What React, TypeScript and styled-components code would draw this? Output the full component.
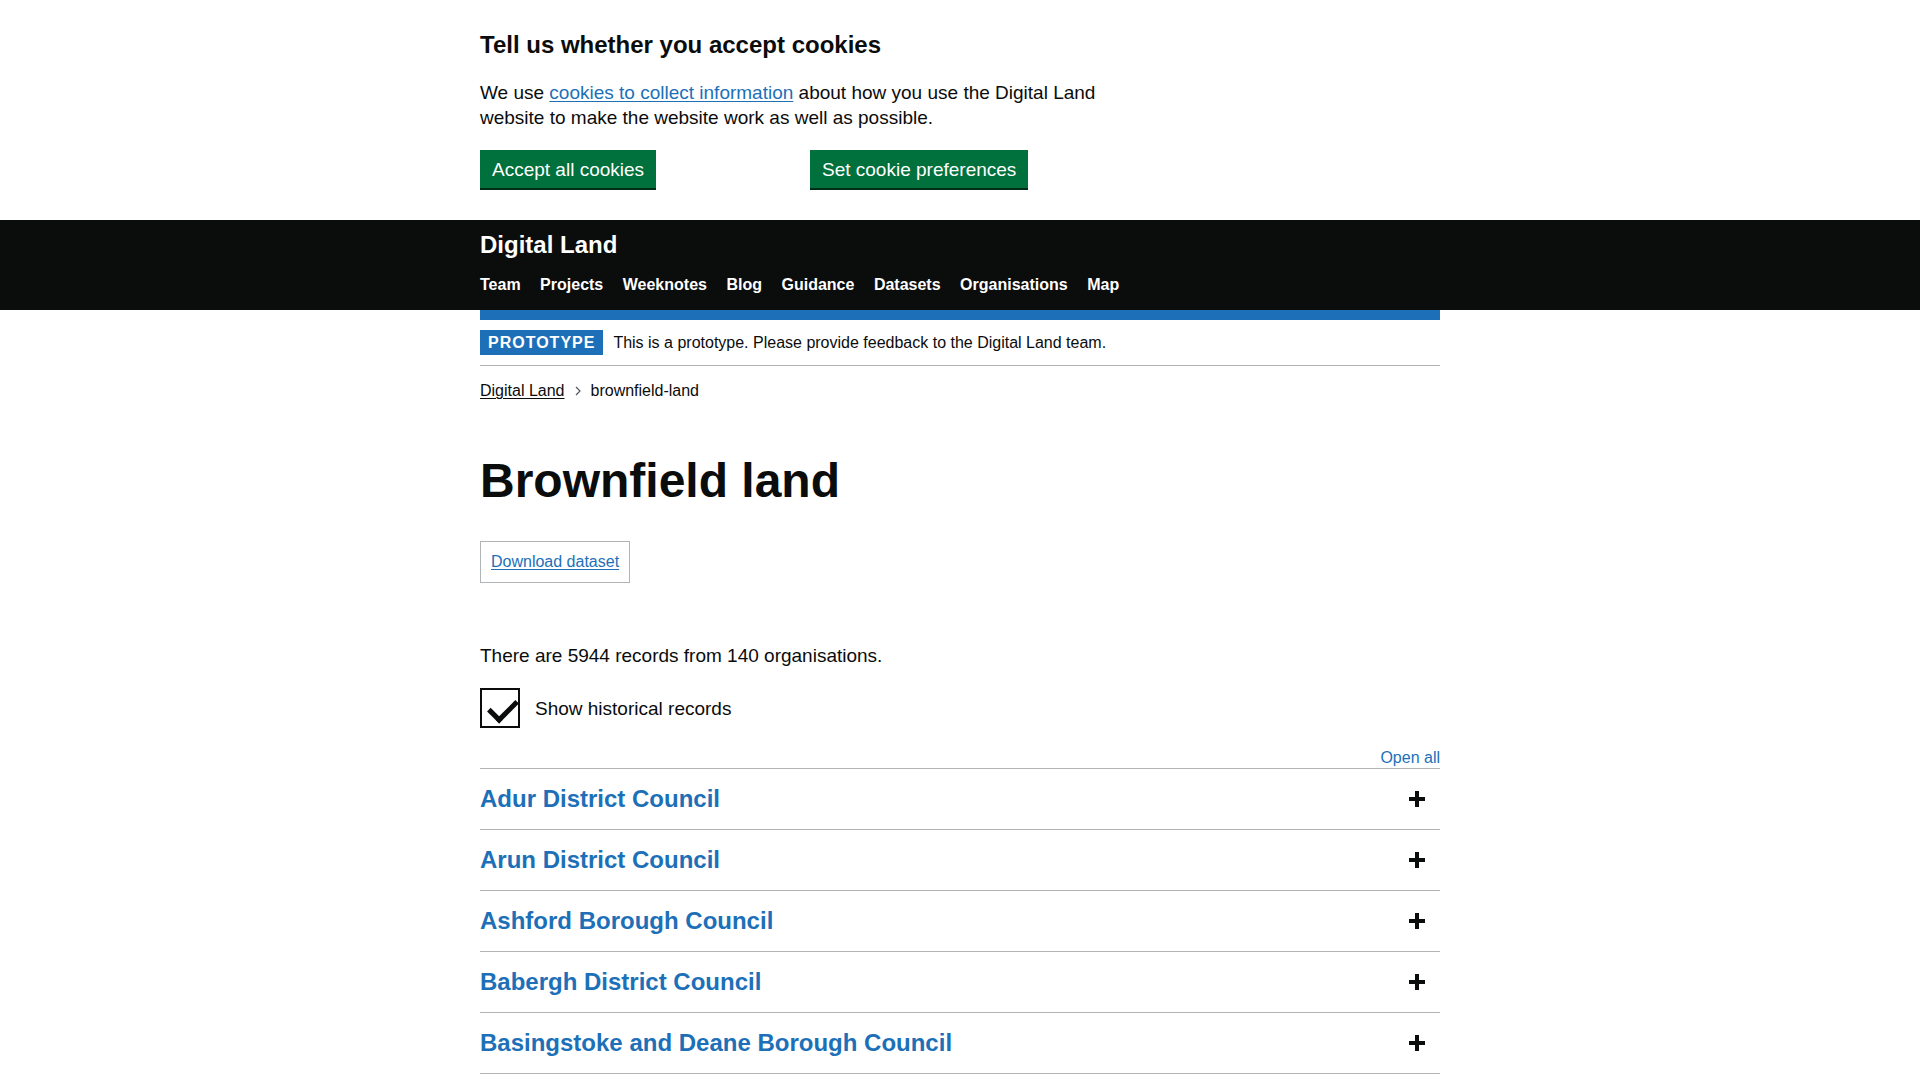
import React from 'react';
import styled, { createGlobalStyle } from 'styled-components';

const GlobalStyle = createGlobalStyle`
  html, body {
    margin: 0;
    padding: 0;
    background: #fff;
    color: #0b0c0c;
    font-family: "Liberation Sans", Arial, sans-serif;
  }

  * {
    box-sizing: border-box;
  }
`;

const Width = styled.div`
  width: 960px;
  margin: 0 auto;
`;

const CookieBanner = styled.div`
  padding: 30px 0 32px;
`;

const CookieHeading = styled.h2`
  margin: 0 0 20px;
  font-size: 24px;
  line-height: 30px;
  font-weight: 700;
`;

const CookieText = styled.p`
  width: 630px;
  margin: 0 0 20px;
  font-size: 19px;
  line-height: 25px;
`;

const Link = styled.a<{ $dark?: boolean }>`
  color: ${(p) => (p.$dark ? '#0b0c0c' : '#1d70b8')};
  text-decoration: underline;
  text-decoration-thickness: 1px;
  text-underline-offset: 0.1em;
`;

const ButtonRow = styled.div`
  display: grid;
  grid-template-columns: 330px 1fr;
  align-items: start;
`;

const Button = styled.button`
  justify-self: start;
  margin: 0;
  padding: 8px 10px 7px;
  border: 2px solid transparent;
  border-radius: 0;
  background: #00703c;
  box-shadow: 0 2px 0 #002d18;
  color: #fff;
  font-family: inherit;
  font-size: 19px;
  line-height: 19px;
  cursor: pointer;
`;

const Header = styled.header`
  background: #0b0c0c;
  color: #fff;
  padding-top: 10px;
`;

const Logo = styled.div`
  font-size: 24px;
  line-height: 30px;
  font-weight: 700;
`;

const Nav = styled.nav`
  display: flex;
  gap: 19.5px;
  margin-top: 12px;
  padding-bottom: 13px;
`;

const NavItem = styled.a`
  color: #fff;
  text-decoration: none;
  font-size: 16px;
  line-height: 25px;
  font-weight: 700;
`;

const BlueBar = styled.div`
  height: 10px;
  background: #1d70b8;
`;

const PhaseBanner = styled.div`
  display: flex;
  align-items: center;
  padding: 10px 0;
  border-bottom: 1px solid #b1b4b6;
`;

const Tag = styled.strong`
  margin-right: 10px;
  padding: 5px 8px 4px;
  background: #1d70b8;
  color: #fff;
  font-size: 16px;
  line-height: 16px;
  font-weight: 700;
  letter-spacing: 1px;
  text-transform: uppercase;
`;

const PhaseText = styled.span`
  font-size: 16px;
  line-height: 20px;
`;

const Breadcrumbs = styled.ol`
  display: flex;
  align-items: center;
  margin: 15px 0 0;
  padding: 0;
  list-style: none;
  font-size: 16px;
  line-height: 20px;
`;

const Chevron = styled.svg`
  margin: 0 10px;
`;

const Title = styled.h1`
  margin: 55px 0 35px;
  font-size: 48px;
  line-height: 50px;
  font-weight: 700;
`;

const DownloadBox = styled.div`
  display: inline-block;
  padding: 8px 10px;
  border: 1px solid #b1b4b6;
  font-size: 16px;
  line-height: 24px;
`;

const Summary = styled.p`
  margin: 60px 0 20px;
  font-size: 19px;
  line-height: 25px;
`;

const CheckRow = styled.label`
  display: flex;
  align-items: center;
  gap: 15px;
  font-size: 19px;
  line-height: 25px;
`;

const CheckBox = styled.span`
  position: relative;
  width: 40px;
  height: 40px;
  border: 2px solid #0b0c0c;

  &::after {
    content: '';
    position: absolute;
    top: 9px;
    left: 7px;
    width: 23px;
    height: 12px;
    border: solid #0b0c0c;
    border-width: 0 0 5px 5px;
    transform: rotate(-45deg);
  }
`;

const Controls = styled.div`
  display: flex;
  justify-content: flex-end;
  margin-top: 20px;
`;

const OpenAll = styled.button`
  padding: 0;
  border: 0;
  background: none;
  color: #1d70b8;
  font-family: inherit;
  font-size: 16px;
  line-height: 20px;
  cursor: pointer;
`;

const Accordion = styled.div`
  border-bottom: 1px solid #b1b4b6;
`;

const Section = styled.div`
  position: relative;
  padding: 15px 40px 15px 0;
  border-top: 1px solid #b1b4b6;
`;

const SectionHeading = styled.h2`
  margin: 0;
  color: #1d70b8;
  font-size: 24px;
  line-height: 30px;
  font-weight: 700;
`;

const PlusIcon = styled.span`
  position: absolute;
  top: 50%;
  right: 15px;
  width: 16px;
  height: 16px;
  margin-top: -8px;

  &::before,
  &::after {
    content: '';
    position: absolute;
    background: #0b0c0c;
  }

  &::before {
    left: 0;
    top: 6px;
    width: 16px;
    height: 4px;
  }

  &::after {
    left: 6px;
    top: 0;
    width: 4px;
    height: 16px;
  }
`;

const navItems = ['Team', 'Projects', 'Weeknotes', 'Blog', 'Guidance', 'Datasets', 'Organisations', 'Map'];

const organisations = [
  'Adur District Council',
  'Arun District Council',
  'Ashford Borough Council',
  'Babergh District Council',
  'Basingstoke and Deane Borough Council',
];

export default function App() {
  return (
    <>
      <GlobalStyle />
      <CookieBanner>
        <Width>
          <CookieHeading>Tell us whether you accept cookies</CookieHeading>
          <CookieText>
            We use <Link href="#">cookies to collect information</Link> about how you use the Digital Land
            website to make the website work as well as possible.
          </CookieText>
          <ButtonRow>
            <Button>Accept all cookies</Button>
            <Button>Set cookie preferences</Button>
          </ButtonRow>
        </Width>
      </CookieBanner>

      <Header>
        <Width>
          <Logo>Digital Land</Logo>
          <Nav>
            {navItems.map((item) => (
              <NavItem key={item} href="#">
                {item}
              </NavItem>
            ))}
          </Nav>
        </Width>
      </Header>

      <Width>
        <BlueBar />
        <PhaseBanner>
          <Tag>Prototype</Tag>
          <PhaseText>This is a prototype. Please provide feedback to the Digital Land team.</PhaseText>
        </PhaseBanner>

        <Breadcrumbs>
          <li>
            <Link href="#" $dark>
              Digital Land
            </Link>
          </li>
          <Chevron width="6" height="10" viewBox="0 0 6 10">
            <path d="M1 1 L5 5 L1 9" fill="none" stroke="#505a5f" strokeWidth="1.2" />
          </Chevron>
          <li>brownfield-land</li>
        </Breadcrumbs>

        <Title>Brownfield land</Title>

        <DownloadBox>
          <Link href="#">Download dataset</Link>
        </DownloadBox>

        <Summary>There are 5944 records from 140 organisations.</Summary>

        <CheckRow>
          <CheckBox />
          Show historical records
        </CheckRow>

        <Controls>
          <OpenAll>Open all</OpenAll>
        </Controls>

        <Accordion>
          {organisations.map((name) => (
            <Section key={name}>
              <SectionHeading>{name}</SectionHeading>
              <PlusIcon />
            </Section>
          ))}
        </Accordion>
      </Width>
    </>
  );
}
